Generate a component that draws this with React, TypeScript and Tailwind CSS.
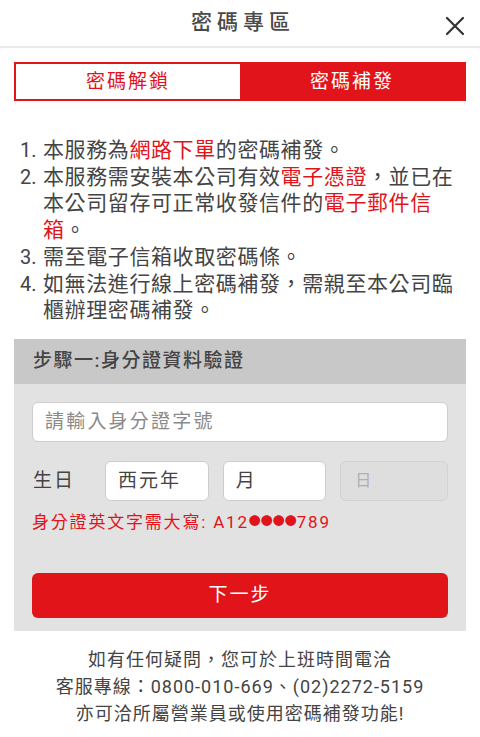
import React, { useState } from 'react';

const font = { fontFamily: "Roboto, 'Noto Sans CJK TC', 'Noto Sans', sans-serif" };

const Red: React.FC<{ children: React.ReactNode }> = ({ children }) => (
    <span className="text-[#e0141a]">{children}</span>
);

const notes: { no: string; body: React.ReactNode }[] = [
    { no: '1.', body: <>本服務為<Red>網路下單</Red>的密碼補發。</> },
    {
        no: '2.',
        body: (
            <>
                本服務需安裝本公司有效<Red>電子憑證</Red>，並已在本公司留存可正常收發信件的<Red>電子郵件信箱</Red>。
            </>
        ),
    },
    { no: '3.', body: <>需至電子信箱收取密碼條。</> },
    { no: '4.', body: <>如無法進行線上密碼補發，需親至本公司臨櫃辦理密碼補發。</> },
];

const App: React.FC = () => {
    const [tab, setTab] = useState<'unlock' | 'reissue'>('reissue');
    const [idNo, setIdNo] = useState('');

    return (
        <div className="w-[480px] min-h-[737px] bg-white text-[#444]" style={font}>
            {/* header */}
            <div className="relative flex h-[48px] items-center justify-center border-b-2 border-[#ebebeb]">
                <span className="pl-[6px] text-[21px] font-medium tracking-[5px] text-[#4a4a4a]">密碼專區</span>
                <button className="absolute right-[14px] top-[15px] text-[#333]">
                    <svg width="22" height="22" viewBox="0 0 22 22" fill="none" stroke="currentColor" strokeWidth="2.2" strokeLinecap="round">
                        <path d="M3 3 L19 19 M19 3 L3 19" />
                    </svg>
                </button>
            </div>

            {/* tabs */}
            <div className="mx-[14px] mt-[14px] flex h-[39px] border-2 border-[#e0141a]">
                <button
                    onClick={() => setTab('unlock')}
                    className={`flex-1 pt-[2px] text-[19px] tracking-[2px] ${tab === 'unlock' ? 'bg-[#e0141a] text-white' : 'bg-white text-[#e0141a]'}`}
                >
                    密碼解鎖
                </button>
                <button
                    onClick={() => setTab('reissue')}
                    className={`flex-1 pt-[2px] text-[19px] tracking-[2px] ${tab === 'reissue' ? 'bg-[#e0141a] text-white' : 'bg-white text-[#e0141a]'}`}
                >
                    密碼補發
                </button>
            </div>

            {/* notes */}
            <div className="ml-[20px] mr-[13px] mt-[36px] text-[21px] leading-[26.7px] tracking-[0.6px] text-[#444]">
                {notes.map((n) => (
                    <div key={n.no} className="flex">
                        <span className="w-[23px] shrink-0 text-[20px] tracking-normal">{n.no}</span>
                        <span>{n.body}</span>
                    </div>
                ))}
            </div>

            {/* step one */}
            <div className="mx-[14px] mt-[15px] bg-[#e2e2e2]">
                <div className="flex h-[45px] items-center bg-[#c8c8c8] px-[19px] text-[19px] font-medium tracking-[1.5px] text-[#444]">
                    步驟一:身分證資料驗證
                </div>
                <div className="px-[18px] pb-[13px] pt-[18px]">
                    <input
                        value={idNo}
                        onChange={(e) => setIdNo(e.target.value)}
                        placeholder="請輸入身分證字號"
                        className="h-[40px] w-full rounded-[6px] border border-[#cdcdcd] bg-white px-[12px] text-[19px] tracking-[2.2px] text-[#444] outline-none placeholder:text-[#8a8a8a]"
                    />
                    <div className="mt-[19px] flex h-[40px] items-center">
                        <span className="w-[73px] shrink-0 pl-[1px] text-[19px] tracking-[2px]">生日</span>
                        <div className="flex flex-1 gap-[14px]">
                            <div className="flex h-[40px] flex-1 items-center rounded-[6px] border border-[#cdcdcd] bg-white px-[12px] text-[19px] tracking-[2px]">
                                西元年
                            </div>
                            <div className="flex h-[40px] flex-1 items-center rounded-[6px] border border-[#cdcdcd] bg-white px-[12px] text-[19px]">
                                月
                            </div>
                            <div className="flex h-[40px] flex-1 items-center rounded-[6px] border border-[#d2d2d2] bg-[#dedede] px-[14px] text-[16px] text-[#b0b0b0]">
                                日
                            </div>
                        </div>
                    </div>
                    <div className="mt-[10px] flex items-center text-[17px] leading-[22px] tracking-[1.8px] text-[#e0141a]">
                        <span>身分證英文字需大寫: A12</span>
                        <span className="text-[12px] tracking-[0px]">●●●●</span>
                        <span>789</span>
                    </div>
                    <button className="mt-[40px] h-[45px] w-full rounded-[6px] bg-[#e01419] text-[19px] tracking-[2px] text-white">
                        下一步
                    </button>
                </div>
            </div>

            {/* footer */}
            <div className="mt-[15px] text-center text-[18px] leading-[27px] tracking-[1px] text-[#444]">
                <p>如有任何疑問，您可於上班時間電洽</p>
                <p>客服專線：0800-010-669、(02)2272-5159</p>
                <p>亦可洽所屬營業員或使用密碼補發功能!</p>
            </div>
        </div>
    );
};

export default App;
